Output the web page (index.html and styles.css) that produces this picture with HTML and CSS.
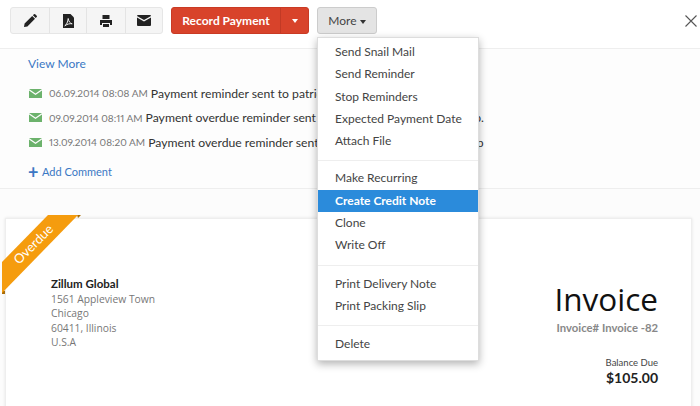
FILE: index.html
```html
<!DOCTYPE html>
<html lang="en">
<head>
    <meta charset="UTF-8">
    <title>Invoice</title>
    <link rel="stylesheet" href="styles.css">
</head>
<body>
    <!-- toolbar -->
    <div class="toolbar">
        <div class="btn-group">
            <button class="icon-btn w1"><svg width="14" height="14" viewBox="0 0 14 14"><path d="M1 13l.6-3.4L9.2 2l2.800 2.800-7.600 7.600zM9.900 1.300l1-1a1 1 0 0 1 1.300 0l1.500 1.500a1 1 0 0 1 0 1.300l-1 1z" fill="#222"/></svg></button>
            <button class="icon-btn w2"><svg width="11" height="14" viewBox="0 0 11 14"><path d="M0 0h7.500L11 3.500V14H0z" fill="#222"/><path d="M1.800 11.800c1.800-1 3-3.800 3.400-7.300.5 3 2 5 4 5.300-2.200-.4-5 .2-7.400 2z" fill="none" stroke="#eee" stroke-width="1"/></svg></button>
            <button class="icon-btn w3"><svg width="14" height="14" viewBox="0 0 14 14"><path d="M3.500 1h7v4h-7zM1 6h12v5h-2V9H3v2H1zM4 10h6v3H4z" fill="#222"/></svg></button>
            <button class="icon-btn w4"><svg width="14" height="11" viewBox="0 0 14 11"><path d="M1 0h12a1 1 0 0 1 1 .9L7 5 0 .9A1 1 0 0 1 1 0zM0 2.500l7 4 7-4V10a1 1 0 0 1-1 1H1a1 1 0 0 1-1-1z" fill="#222"/></svg></button>
        </div>
        <div class="record">
            <button class="record-main">Record Payment</button>
            <button class="record-caret"><span class="caret caret-white"></span></button>
        </div>
        <button class="more-btn">More <span class="caret"></span></button>
        <svg class="close" width="12" height="12" viewBox="0 0 12 12"><path d="M.5.500l11 11M11.500.500l-11 11" stroke="#555" stroke-width="1.100" fill="none"/></svg>
    </div>

    <!-- reminders -->
    <div class="history">
        <a class="view-more">View More</a>
        <div class="rows">
            <div class="row"><svg class="mail" width="13" height="9" viewBox="0 0 13 9"><path d="M0 0h13L6.500 4.500zM0 1.500l6.500 4.500L13 1.500V9H0z" fill="#6cb26c"/></svg><span class="stamp">06.09.2014 08:08 AM</span> Payment reminder sent to patricia@zillum.com.</div>
            <div class="row"><svg class="mail" width="13" height="9" viewBox="0 0 13 9"><path d="M0 0h13L6.500 4.500zM0 1.500l6.500 4.500L13 1.500V9H0z" fill="#6cb26c"/></svg><span class="stamp">09.09.2014 08:11 AM</span> Payment overdue reminder sent to patricia@zillumglobal.com.p.</div>
            <div class="row"><svg class="mail" width="13" height="9" viewBox="0 0 13 9"><path d="M0 0h13L6.500 4.500zM0 1.500l6.500 4.500L13 1.500V9H0z" fill="#6cb26c"/></svg><span class="stamp">13.09.2014 08:20 AM</span> Payment overdue reminder sent to patricia@zillumglobal.com.p</div>
        </div>
        <a class="add-comment"><span class="plus">+</span>Add Comment</a>
    </div>

    <!-- invoice -->
    <div class="sheet">
        <div class="card">
            <div class="from">
                <div class="org">Zillum Global</div>
                <div>1561 Appleview Town</div>
                <div>Chicago</div>
                <div>60411, Illinois</div>
                <div>U.S.A</div>
            </div>
            <div class="summary">
                <div class="doc-title">Invoice</div>
                <div class="doc-no">Invoice# Invoice -82</div>
                <div class="bal-label">Balance Due</div>
                <div class="bal-value">$105.00</div>
            </div>
        </div>
    </div>

    <svg class="ribbon" width="82" height="82" viewBox="0 0 82 82">
        <path d="M77 1h4l-3 3zM2 76v4h3v-3z" fill="#a86c08"/>
        <path d="M48 0h30L2 78V47z" fill="#f59c0e" transform="translate(0 1)"/>
        <text transform="translate(19 51) rotate(-45)" class="ribbon-text">Overdue</text>
    </svg>

    <div class="menu">
        <ul>
            <li>Send Snail Mail</li>
            <li>Send Reminder</li>
            <li>Stop Reminders</li>
            <li>Expected Payment Date</li>
            <li>Attach File</li>
        </ul>
        <ul>
            <li>Make Recurring</li>
            <li class="active">Create Credit Note</li>
            <li>Clone</li>
            <li>Write Off</li>
        </ul>
        <ul class="tight">
            <li>Print Delivery Note</li>
            <li>Print Packing Slip</li>
        </ul>
        <ul class="tight">
            <li>Delete</li>
        </ul>
    </div>
</body>
</html>
```
FILE: styles.css
```css
* {
    margin: 0;
    padding: 0;
    box-sizing: border-box;
}

html, body {
    height: 406px;
    overflow: hidden;
}

body {
    background: #fff;
    font-family: "Lato", "Liberation Sans", sans-serif;
    color: #333;
    position: relative;
    width: 700px;
}

button {
    font-family: inherit;
}

.toolbar {
    height: 49px;
    padding: 7px 0 0 10px;
    border-bottom: 1px solid #eee;
    display: flex;
    align-items: flex-start;
    position: relative;
}

.btn-group {
    display: flex;
    height: 27px;
    width: 153px;
    background: #f5f5f5;
    border: 1px solid #e6e6e6;
    border-radius: 3px;
    margin-right: 8px;
}

.icon-btn {
    border: none;
    background: none;
    border-right: 1px solid #e4e4e4;
    display: flex;
    align-items: center;
    justify-content: center;
}

.icon-btn.w1 { width: 39px; }
.icon-btn.w2 { width: 37px; }
.icon-btn.w3 { width: 39px; }
.icon-btn.w4 { width: 36px; border-right: none; }

.record {
    display: flex;
    height: 27px;
    width: 138px;
    margin-right: 8px;
    background: #d8432b;
    border: 1px solid #c93a24;
    border-radius: 3px;
}

.record-main {
    width: 109px;
    border: none;
    background: none;
    color: #fff;
    font-size: 12px;
    font-weight: 700;
    border-right: 1px solid #c23a25;
}

.record-caret {
    flex: 1;
    border: none;
    background: none;
    display: flex;
    align-items: center;
    justify-content: center;
}

.caret {
    display: inline-block;
    width: 0;
    height: 0;
    border-left: 3.5px solid transparent;
    border-right: 3.5px solid transparent;
    border-top: 4px solid #333;
    vertical-align: middle;
}

.caret-white {
    border-top-color: #fff;
}

.more-btn {
    width: 60px;
    height: 27px;
    background: #e4e4e4;
    border: 1px solid #ccc;
    border-radius: 3px;
    font-size: 12px;
    color: #444;
}

.close {
    position: absolute;
    left: 685px;
    top: 15px;
}

.history {
    height: 140px;
    background: #fdfdfd;
    border-bottom: 1px solid #eee;
    padding: 7px 0 0 28px;
    font-size: 12.2px;
}

.view-more {
    display: block;
    color: #3b78c4;
    font-size: 12px;
    line-height: 16px;
}

.rows {
    margin-top: 9px;
}

.row {
    display: flex;
    align-items: center;
    height: 24.5px;
    padding-left: 1px;
    white-space: pre;
    color: #333;
    font-variant-numeric: proportional-nums;
}

.mail {
    margin-right: 7px;
}

.stamp {
    color: #777;
    font-size: 10px;
}

.add-comment {
    display: flex;
    align-items: center;
    margin-top: 9px;
    color: #3b78c4;
    font-size: 11px;
    line-height: 16px;
}

.plus {
    width: 14px;
    font-weight: 700;
    font-size: 18px;
}

.sheet {
    height: 217px;
    background: #fcfcfc;
    padding: 29px 8px 0 5px;
    overflow: hidden;
}

.card {
    height: 220px;
    background: #fff;
    border: 1px solid #eee;
    box-shadow: 0 0 3px rgba(0,0,0,0.1);
    display: flex;
    justify-content: space-between;
}

.from {
    padding: 58px 0 0 45px;
    font-family: "Open Sans", sans-serif;
    font-size: 10.3px;
    line-height: 14.6px;
    color: #777;
}

.org {
    color: #222;
    font-family: "Lato", sans-serif;
    font-size: 11.5px;
    font-weight: 700;
}

.summary {
    padding: 61px 33px 0 0;
    text-align: right;
}

.doc-title {
    font-family: "Open Sans", sans-serif;
    font-size: 31.5px;
    line-height: 38px;
    color: #111;
}

.doc-no {
    font-size: 11.3px;
    font-weight: 700;
    color: #888;
    margin-top: 3px;
}

.bal-label {
    font-size: 9.5px;
    color: #444;
    margin-top: 23px;
}

.bal-value {
    font-size: 14px;
    font-weight: 700;
    color: #222;
    margin-top: 1px;
}

.ribbon {
    position: absolute;
    left: 0;
    top: 214px;
}

.ribbon-text {
    font-family: "Lato", sans-serif;
    font-size: 13px;
    fill: #fff;
}

.menu {
    position: absolute;
    left: 317px;
    top: 37px;
    width: 162px;
    height: 324px;
    background: #fff;
    border: 1px solid #ddd;
    box-shadow: 0 3px 8px rgba(0,0,0,0.3);
    font-size: 12px;
    color: #444;
}

.menu ul {
    list-style: none;
    padding: 6px 0 8px;
    border-bottom: 1px solid #eee;
}

.menu ul:first-child {
    padding-top: 3px;
}

.menu ul.tight {
    padding-top: 7px;
}

.menu ul:last-child {
    border-bottom: none;
}

.menu li {
    height: 22.3px;
    line-height: 22.3px;
    padding-left: 17px;
}

.menu li.active {
    background: #2b8bdb;
    color: #fff;
    font-weight: 700;
}
```
